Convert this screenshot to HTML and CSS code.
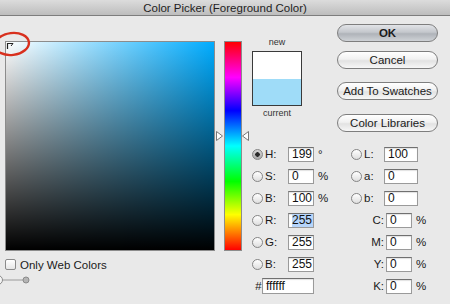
FILE: index.html
```html
<!DOCTYPE html>
<html lang="en">
<head>
    <meta charset="UTF-8">
    <meta name="viewport" content="width=device-width, initial-scale=1.0">
    <title>Color Picker (Foreground Color)</title>
    <link rel="stylesheet" href="styles.css">
</head>
<body>
    <div class="window">
        <div class="titlebar">Color Picker (Foreground Color)</div>

        <div class="content">
            <!-- colour field + hue strip -->
            <div class="left">
                <div class="picker">
                    <div class="field">
                        <svg class="marker" width="10" height="8" viewBox="0 0 10 8">
                            <path d="M1.5 7 V1.5 H7" fill="none" stroke="#222" stroke-width="1.2"/>
                            <path d="M7 1.5 L5 4" fill="none" stroke="#222" stroke-width="1"/>
                        </svg>
                    </div>
                    <div class="hue"></div>
                    <svg class="arrow arrow-left" width="7" height="10" viewBox="0 0 7 10">
                        <path d="M0.5 0.5 L6.5 5 L0.5 9.5 Z" fill="#fff" stroke="#777"/>
                    </svg>
                    <svg class="arrow arrow-right" width="7" height="10" viewBox="0 0 7 10">
                        <path d="M6.5 0.5 L0.5 5 L6.5 9.5 Z" fill="#fff" stroke="#777"/>
                    </svg>
                </div>
                <label class="webonly"><span class="check"></span>Only Web Colors</label>
                <svg class="slider" width="30" height="10" viewBox="0 0 30 10">
                    <circle cx="-2" cy="5" r="4.5" fill="#f4f4f4" stroke="#8a8a8a"/>
                    <line x1="3" y1="5" x2="23" y2="5" stroke="#9a9a9a"/>
                    <circle cx="26" cy="5" r="3" fill="#b4b4b4" stroke="#8a8a8a"/>
                </svg>
            </div>

            <div class="right">
                <div class="top">
                    <div class="swatches">
                        <div class="cap">new</div>
                        <div class="swatch">
                            <div class="sw-new"></div>
                            <div class="sw-current"></div>
                        </div>
                        <div class="cap">current</div>
                    </div>
                    <div class="buttons">
                        <button class="btn btn-default">OK</button>
                        <button class="btn btn-cancel">Cancel</button>
                        <button class="btn btn-add">Add To Swatches</button>
                        <button class="btn btn-lib">Color Libraries</button>
                    </div>
                </div>

                <div class="values">
                    <div class="col col-a">
                        <div class="row"><span class="radio on"></span><span class="lbl">H:</span><span class="inp">199</span><span class="unit">&deg;</span></div>
                        <div class="row"><span class="radio"></span><span class="lbl">S:</span><span class="inp">0</span><span class="unit">%</span></div>
                        <div class="row"><span class="radio"></span><span class="lbl">B:</span><span class="inp">100</span><span class="unit">%</span></div>
                        <div class="row"><span class="radio"></span><span class="lbl">R:</span><span class="inp"><span class="sel">255</span></span></div>
                        <div class="row"><span class="radio"></span><span class="lbl">G:</span><span class="inp">255</span></div>
                        <div class="row"><span class="radio"></span><span class="lbl">B:</span><span class="inp">255</span></div>
                        <div class="row"><span class="hash">#</span><span class="inp inp-hex">ffffff</span></div>
                    </div>
                    <div class="col col-b">
                        <div class="row"><span class="radio"></span><span class="lbl lbl-b">L:</span><span class="inp inp-wide">100</span></div>
                        <div class="row"><span class="radio"></span><span class="lbl lbl-b">a:</span><span class="inp inp-wide">0</span></div>
                        <div class="row"><span class="radio"></span><span class="lbl lbl-b">b:</span><span class="inp inp-wide">0</span></div>
                        <div class="row"><span class="lbl lbl-c">C:</span><span class="inp">0</span><span class="unit">%</span></div>
                        <div class="row"><span class="lbl lbl-c">M:</span><span class="inp">0</span><span class="unit">%</span></div>
                        <div class="row"><span class="lbl lbl-c">Y:</span><span class="inp">0</span><span class="unit">%</span></div>
                        <div class="row"><span class="lbl lbl-c">K:</span><span class="inp">0</span><span class="unit">%</span></div>
                    </div>
                </div>
            </div>
        </div>

        <!-- red annotation ring -->
        <svg class="ring" width="42" height="32" viewBox="0 0 42 32">
            <ellipse cx="18" cy="15" rx="17" ry="11" fill="none" stroke="#d8301e" stroke-width="2.4" transform="rotate(-7 18 15)"/>
        </svg>
    </div>
</body>
</html>
```

FILE: styles.css
```css
body {
    margin: 0;
    padding: 0;
    font-family: "Liberation Sans", Arial, sans-serif;
    color: #1a1a1a;
}

.window {
    position: relative;
    width: 450px;
    height: 304px;
    overflow: hidden;
    background-color: #e9e9e9;
}

.titlebar {
    height: 15px;
    line-height: 16px;
    text-align: center;
    font-size: 11.5px;
    color: #1e1e1e;
    background: linear-gradient(#dcdcdc, #bdbdbd);
    border-bottom: 1px solid #7d7d7d;
}

.content {
    display: flex;
}

/* left side */
.left {
    padding: 25px 0 0 5px;
}

.picker {
    position: relative;
    display: flex;
}

.field {
    position: relative;
    width: 208px;
    height: 208px;
    border: 1px solid #8c8c8c;
    background:
        linear-gradient(to top, #000, rgba(0, 0, 0, 0)),
        linear-gradient(to right, #fff, rgb(0, 172, 255));
}

.marker {
    position: absolute;
    left: 0;
    top: 0;
}

.hue {
    width: 16px;
    height: 208px;
    margin-left: 9px;
    border: 1px solid #8c8c8c;
    background: linear-gradient(#ff0000, #ff00ff 17%, #0000ff 33%, #00ffff 50%, #00ff00 67%, #ffff00 83%, #ff0000);
}

.arrow {
    position: absolute;
    top: 90px;
}

.arrow-left {
    left: 211px;
}

.arrow-right {
    left: 237px;
}

.webonly {
    display: flex;
    align-items: center;
    margin-top: 8px;
    font-size: 11.5px;
    height: 11px;
}

.check {
    width: 9px;
    height: 9px;
    margin-right: 4px;
    border: 1px solid #8a8a8a;
    border-radius: 2px;
    background: linear-gradient(#ffffff, #e6e6e6);
}

.slider {
    display: block;
    margin: 5px 0 0 -5px;
}

/* right side */
.right {
    margin-left: 10px;
}

.top {
    display: flex;
    height: 127px;
}

.swatches {
    width: 50px;
    padding-top: 20px;
}

.cap {
    height: 12px;
    line-height: 12px;
    font-size: 9px;
    text-align: center;
    color: #333;
}

.swatch {
    height: 53px;
    margin: 3px 0 1px;
    border: 1px solid #3a3a3a;
    display: flex;
    flex-direction: column;
}

.sw-new {
    flex: 1;
    background-color: #ffffff;
}

.sw-current {
    flex: 1;
    background-color: #9fdcf8;
}

.buttons {
    display: flex;
    flex-direction: column;
    margin-left: 35px;
    padding-top: 8px;
}

.btn {
    width: 101px;
    height: 18px;
    padding: 0;
    font-family: "Liberation Sans", Arial, sans-serif;
    font-size: 11.5px;
    color: #1a1a1a;
    border: 1px solid #7e7e7e;
    border-radius: 9px;
    background: linear-gradient(#ffffff, #f1f1f1 45%, #e2e2e2 55%, #f7f7f7);
}

.btn-default {
    font-weight: bold;
    background: linear-gradient(#e2e4e8, #c4c7cc 45%, #afb3b9 55%, #cfd2d6);
}

.btn-cancel {
    margin-top: 9px;
}

.btn-add {
    margin-top: 13px;
}

.btn-lib {
    margin-top: 14px;
}

.values {
    display: flex;
}

.col-a {
    width: 99px;
}

.row {
    display: flex;
    align-items: center;
    height: 22px;
    font-size: 11.5px;
}

.radio {
    box-sizing: border-box;
    width: 11px;
    height: 11px;
    border: 1px solid #858585;
    border-radius: 50%;
    background: linear-gradient(#ffffff, #dedede);
}

.radio.on {
    background: radial-gradient(circle, #2a2a2a 0 2px, rgba(0, 0, 0, 0) 2.5px), linear-gradient(#d6d6d6, #a9a9a9);
}

.lbl {
    width: 23px;
    margin-left: 2px;
}

.lbl-b {
    width: 20px;
}

.lbl-c {
    width: 33px;
    margin-left: 0;
    padding-right: 2px;
    text-align: right;
}

.inp {
    box-sizing: border-box;
    width: 26px;
    height: 15px;
    line-height: 13px;
    padding-left: 3px;
    font-size: 12px;
    color: #111;
    background-color: #fff;
    border: 1px solid #9a9a9a;
    border-top-color: #707070;
    box-shadow: inset 0 1px 1px rgba(0, 0, 0, 0.12);
}

.inp-wide {
    width: 34px;
}

.inp-hex {
    width: 52px;
    height: 16px;
    line-height: 14px;
}

.sel {
    display: inline-block;
    background-color: #b6d5fb;
    padding-right: 1px;
}

.unit {
    margin-left: 4px;
}

.hash {
    width: 7px;
    margin-left: 3px;
    font-style: italic;
}

.ring {
    position: absolute;
    left: -6px;
    top: 29px;
}
```
